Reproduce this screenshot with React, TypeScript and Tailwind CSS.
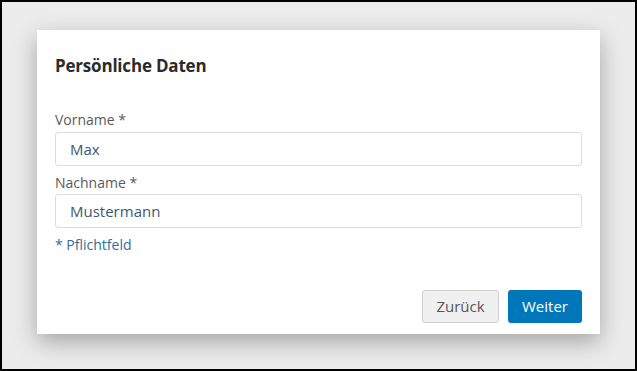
import React from "react";

export default function App() {
  const font = { fontFamily: '"Open Sans", "Noto Sans", sans-serif' };
  return (
    <div
      className="w-[637px] h-[371px] border-2 border-black bg-[#ececec] pl-[35px] pt-[28px] font-['Open_Sans',sans-serif]"
      style={font}
    >
      <div className="w-[563px] h-[304px] bg-white shadow-[0_8px_22px_rgba(0,0,0,0.3)] px-[18px] pt-[24px] flex flex-col">
        <h1 className="text-[17px] leading-[24px] font-bold text-[#2b2b2b] tracking-[-0.2px]">
          Persönliche Daten
        </h1>
        <label className="mt-[32px] text-[14px] leading-[20px] text-[#5a5a5a]">Vorname *</label>
        <div className="mt-[2px] h-[34px] border border-[#dcdcdc] rounded-[3px] flex items-center pl-[14px] text-[15px] text-[#3e5873]">
          Max
        </div>
        <label className="mt-[7px] text-[14px] leading-[20px] text-[#5a5a5a]">Nachname *</label>
        <div className="mt-[1px] h-[34px] border border-[#dcdcdc] rounded-[3px] flex items-center pl-[14px] text-[15px] text-[#3e5873]">
          Mustermann
        </div>
        <div className="mt-[7px] text-[14px] leading-[20px] text-[#2f6e96]">* Pflichtfeld</div>
        <div className="mt-[35px] flex justify-end gap-[9px]">
          <button className="w-[77px] h-[33px] rounded-[3px] border border-[#cfcfcf] bg-[#f0f0f0] text-[15px] text-[#555]">
            Zurück
          </button>
          <button className="w-[74px] h-[33px] rounded-[3px] bg-[#0077bb] text-[15px] text-white">
            Weiter
          </button>
        </div>
      </div>
    </div>
  );
}
